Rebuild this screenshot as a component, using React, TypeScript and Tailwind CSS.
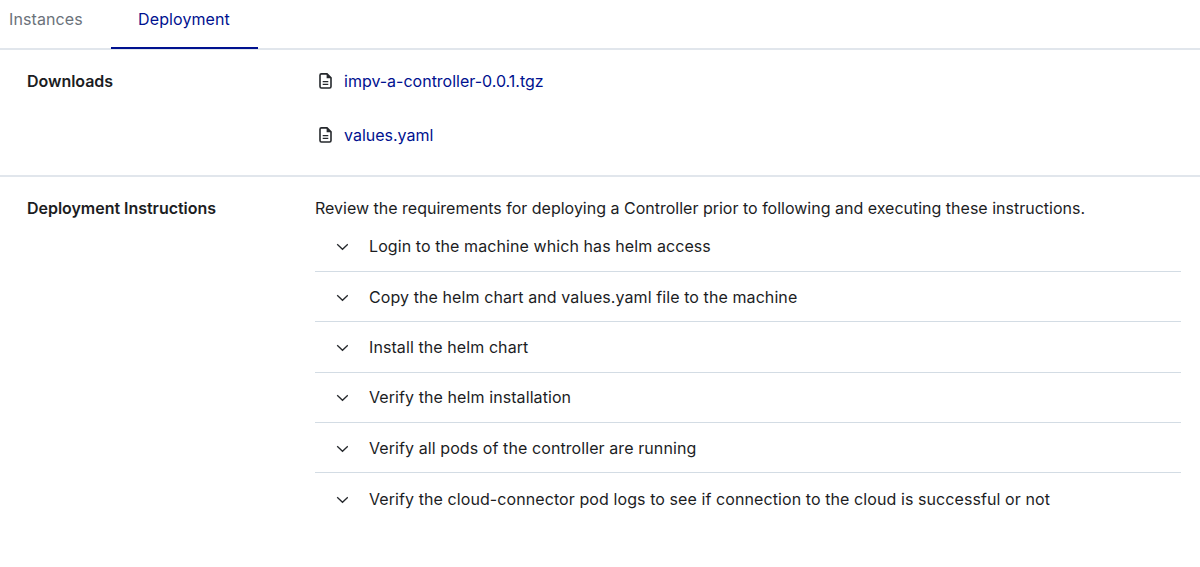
import React from 'react'

const tabs = [
  { label: 'Instances', active: false },
  { label: 'Deployment', active: true },
]

const downloads = ['impv-a-controller-0.0.1.tgz', 'values.yaml']

const steps = [
  'Login to the machine which has helm access',
  'Copy the helm chart and values.yaml file to the machine',
  'Install the helm chart',
  'Verify the helm installation',
  'Verify all pods of the controller are running',
  'Verify the cloud-connector pod logs to see if connection to the cloud is successful or not',
]

const FileIcon = () => (
  <svg width="13" height="16" viewBox="0 0 13 16" fill="none" stroke="#25282c" strokeWidth="1.6">
    <path d="M2.4 0.9H8L12 4.9V13.6A1.4 1.4 0 0 1 10.6 15H2.4A1.4 1.4 0 0 1 1 13.6V2.3A1.4 1.4 0 0 1 2.4 0.9Z" />
    <path d="M7.6 0.9V5.2H12.2Z" fill="#25282c" stroke="none" />
    <path d="M3.7 8.6H9.3M3.7 11.4H9.3" strokeWidth="1.3" />
  </svg>
)

const Chevron = () => (
  <svg
    className="mt-0.5"
    width="12"
    height="8"
    viewBox="0 0 12 8"
    fill="none"
    stroke="#25282c"
    strokeWidth="1.3"
  >
    <path d="M1.2 1.2L6.5 6.3L11.8 1.2" />
  </svg>
)

export default function App() {
  return (
    <div className="h-[567px] w-full overflow-hidden bg-white font-['Inter',sans-serif] text-base text-[#1c1d1f]">
      <nav className="flex h-[50px] border-b-2 border-[#e1e6ec]">
        {tabs.map((tab) => (
          <button
            key={tab.label}
            className={
              tab.active
                ? 'h-[49px] w-[147px] border-b-2 border-[#00118f] pr-px pb-[9px] tracking-[0.1px] text-[#00118f]'
                : 'h-[49px] w-[111px] pb-[11px] pl-[9px] text-left tracking-[0.1px] text-[#6b727a]'
            }
          >
            {tab.label}
          </button>
        ))}
      </nav>
      <section className="flex h-[127px] border-b-2 border-[#e1e6ec] pt-[19px] pl-[27px]">
        <h2 className="w-[288px] font-semibold tracking-[-0.03px]">Downloads</h2>
        <div className="flex flex-col gap-[30px]">
          {downloads.map((name) => (
            <a key={name} href="#" className="flex items-center gap-3 pl-1 text-[#00118f]">
              <FileIcon />
              {name}
            </a>
          ))}
        </div>
      </section>
      <section className="flex pt-[19px] pr-[19px] pl-[27px]">
        <h2 className="w-[288px] shrink-0 font-semibold tracking-[-0.03px]">
          Deployment Instructions
        </h2>
        <div className="grow">
          <p className="mb-[1.7px]">
            Review the requirements for deploying a Controller prior to following and executing
            these instructions.
          </p>
          <ul className="tracking-[0.085px]">
            {steps.map((step) => (
              <li
                key={step}
                className="flex h-[50.35px] items-center gap-[21px] border-b border-[#d3dce4] pl-[21px] last:border-b-0"
              >
                <Chevron />
                {step}
              </li>
            ))}
          </ul>
        </div>
      </section>
    </div>
  )
}
